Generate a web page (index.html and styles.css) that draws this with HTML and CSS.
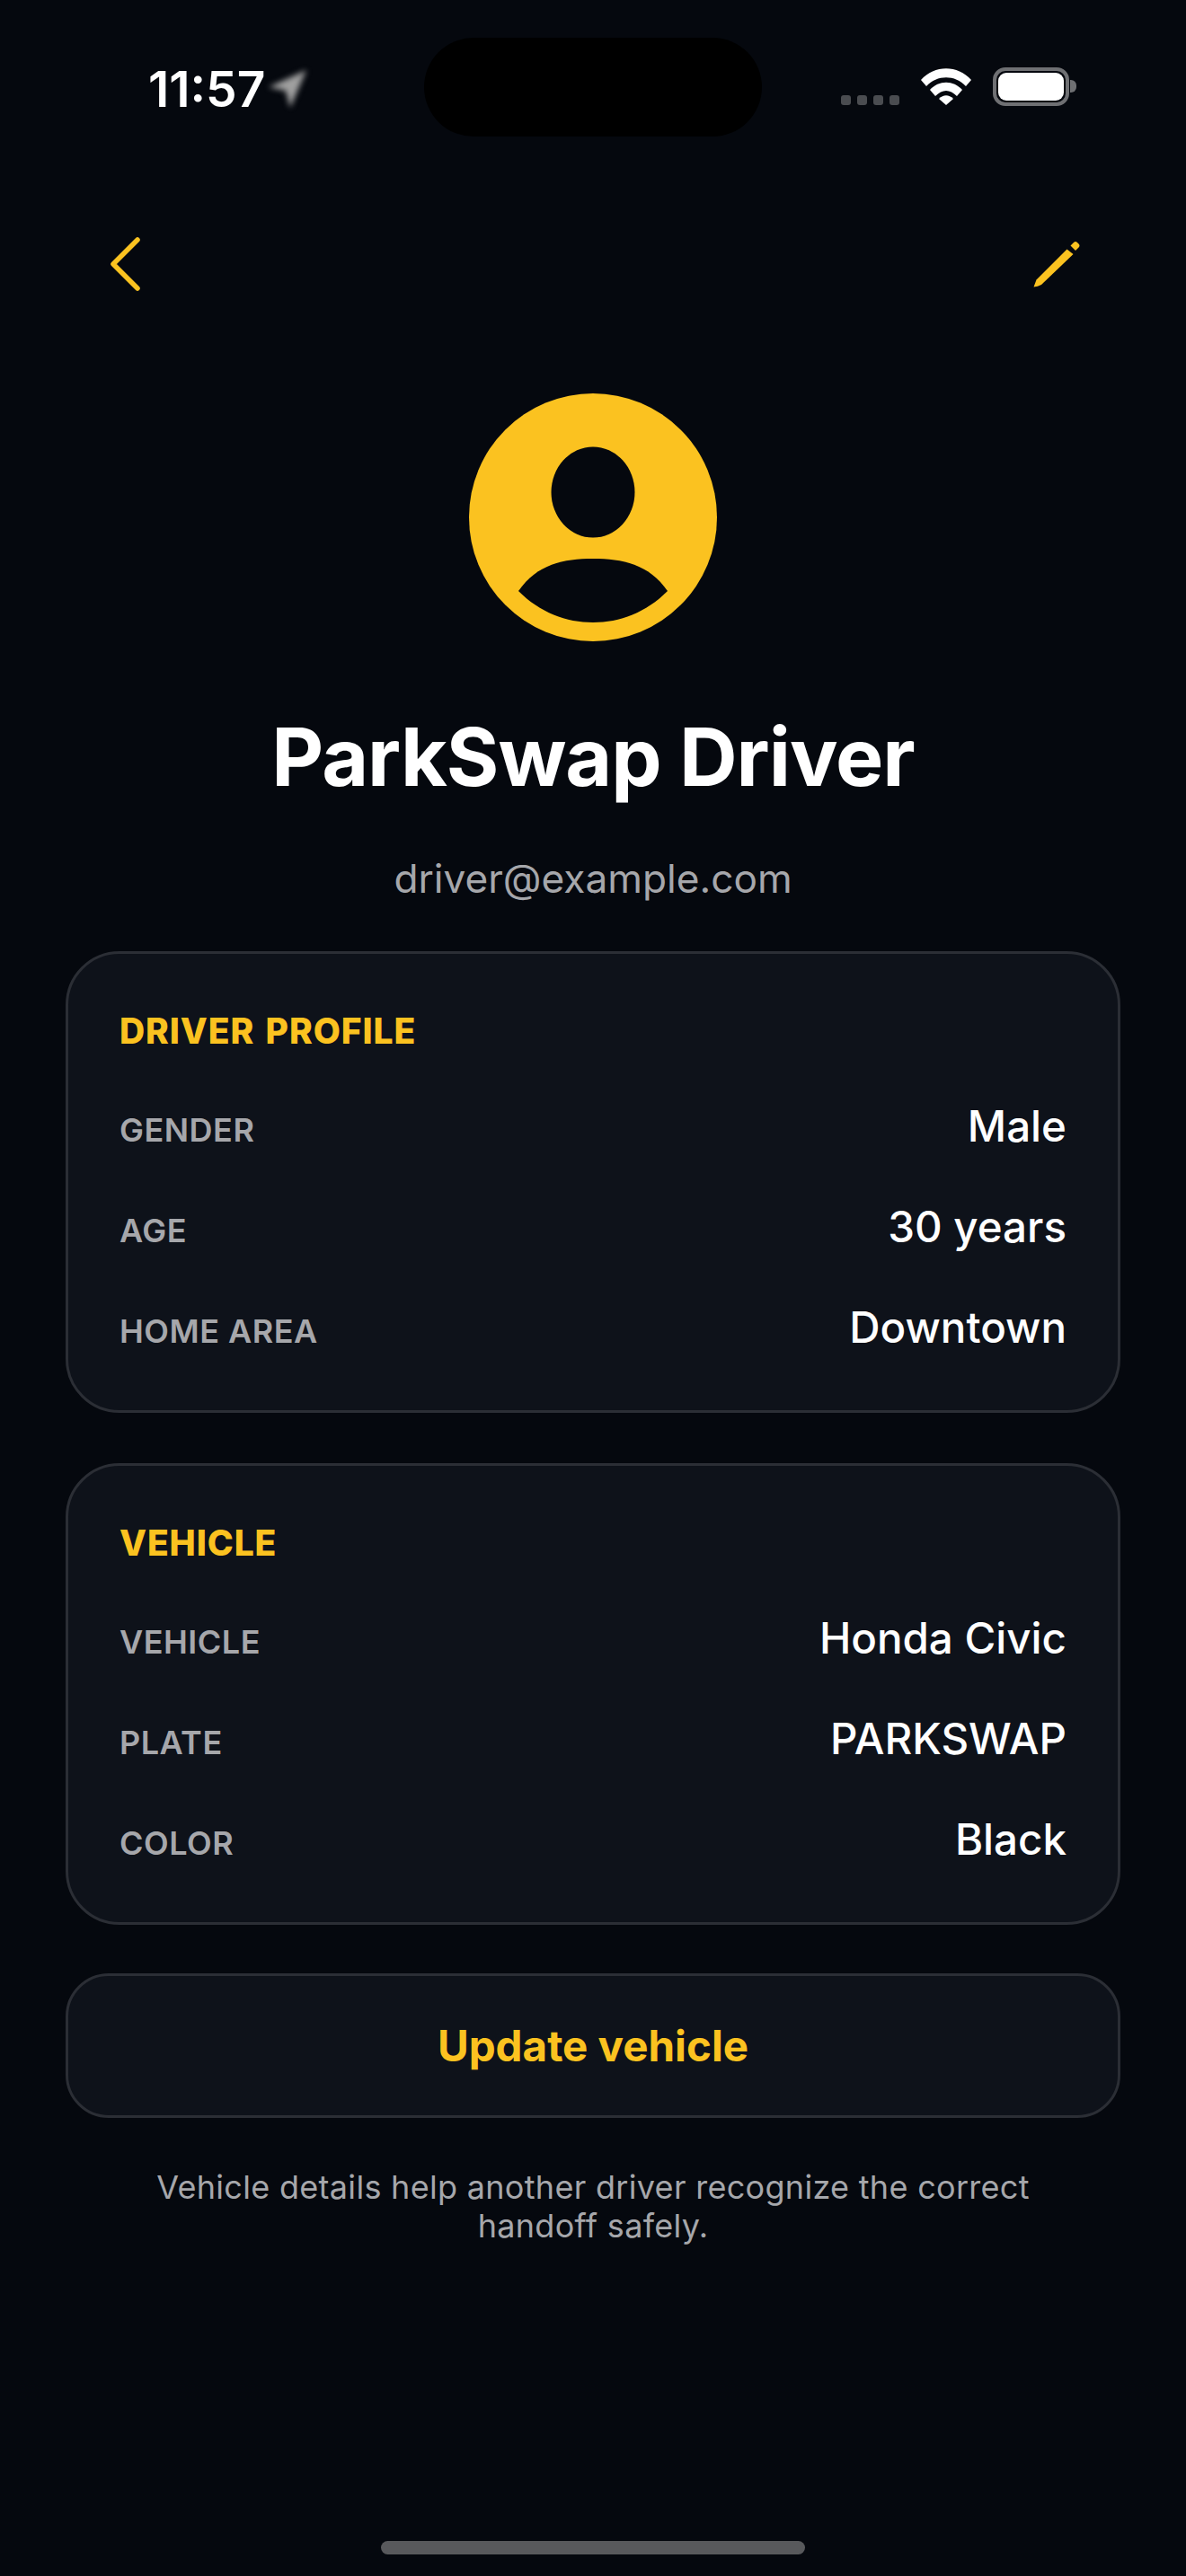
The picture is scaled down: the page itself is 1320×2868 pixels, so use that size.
FILE: index.html
```html
<!DOCTYPE html>
<html lang="en">
<head>
    <meta charset="UTF-8">
    <meta name="viewport" content="width=device-width, initial-scale=1.0">
    <title>ParkSwap Driver</title>
    <link rel="stylesheet" href="styles.css">
</head>
<body>
    <div class="screen">
        <div class="status-bar">
            <div class="status-left">
                <span class="clock">11:57</span>
                <svg class="location" width="48" height="48" viewBox="0 0 48 48">
                    <path d="M45 3 L3 22 L22 26 L27 45 Z" fill="#a0a0a0"/>
                </svg>
            </div>
            <div class="island"></div>
            <div class="status-right">
                <div class="signal"><i></i><i></i><i></i><i></i></div>
                <svg class="wifi" width="58" height="42" viewBox="0 0 58 42">
                    <path d="M1 14 C16 -3 42 -3 57 14 L51 21 C39 8 19 8 7 21 Z" fill="#fff"/>
                    <path d="M11 25 C21 14 37 14 47 25 L41 32 C33 24 25 24 17 32 Z" fill="#fff"/>
                    <path d="M21 35 C26 30 32 30 37 35 L29 42 Z" fill="#fff"/>
                </svg>
                <div class="battery"><div class="battery-fill"></div></div>
                <div class="battery-cap"></div>
            </div>
        </div>

        <div class="nav">
            <svg width="40" height="64" viewBox="0 0 40 64">
                <path d="M33 5 L6 32 L33 59" fill="none" stroke="#fbc220" stroke-width="5.500" stroke-linecap="round" stroke-linejoin="round"/>
            </svg>
            <svg width="60" height="60" viewBox="0 0 60 60">
                <path d="M5.500 55.500 L8.500 47.500 L42.500 13.500 L49.500 19 L14 53 Q10 55 5.500 55.500 Z" fill="#fbc220"/>
                <path d="M46.500 9.500 L50 6 Q52 4 54 6 L55.500 7.500 Q57.500 9.500 55.500 11.500 L52 15 Z" fill="#fbc220"/>
            </svg>
        </div>

        <div class="profile">
            <svg class="avatar" width="276" height="276" viewBox="0 0 276 276">
                <circle cx="138" cy="138" r="138" fill="#fbc220"/>
                <ellipse cx="138" cy="110" rx="46.500" ry="50.500" fill="#05080e"/>
                <path d="M55 220 C76 190 105 184 138 184 C171 184 200 190 221 220 C197 244 168 255 138 255 C108 255 79 244 55 220 Z" fill="#05080e"/>
            </svg>
            <h1 class="name">ParkSwap Driver</h1>
            <p class="email">driver@example.com</p>
        </div>

        <div class="card">
            <h2 class="card-title">DRIVER PROFILE</h2>
            <div class="row"><span class="label">GENDER</span><span class="value">Male</span></div>
            <div class="row"><span class="label">AGE</span><span class="value">30 years</span></div>
            <div class="row"><span class="label">HOME AREA</span><span class="value">Downtown</span></div>
        </div>

        <div class="card">
            <h2 class="card-title">VEHICLE</h2>
            <div class="row"><span class="label">VEHICLE</span><span class="value">Honda Civic</span></div>
            <div class="row"><span class="label">PLATE</span><span class="value">PARKSWAP</span></div>
            <div class="row"><span class="label">COLOR</span><span class="value">Black</span></div>
        </div>

        <button class="update-btn">Update vehicle</button>

        <p class="note">Vehicle details help another driver recognize the correct handoff safely.</p>

        <div class="home-indicator"></div>
    </div>
</body>
</html>
```
FILE: styles.css
```css
* {
    box-sizing: border-box;
}

body {
    margin: 0;
    background-color: #05080e;
    font-family: Inter, "Liberation Sans", sans-serif;
    color: #ffffff;
}

.screen {
    height: 2868px;
    display: flex;
    flex-direction: column;
    overflow: hidden;
}

.status-bar {
    height: 110px;
    margin-top: 42px;
    display: grid;
    grid-template-columns: 472px 376px 472px;
}

.status-left {
    display: flex;
    align-items: flex-start;
    padding: 24px 0 0 165px;
}

.clock {
    font-size: 55px;
    font-weight: 600;
    line-height: 66px;
}

.location {
    margin-top: 9px;
    margin-left: 1px;
    filter: blur(3px);
}

.island {
    background-color: #000000;
    border-radius: 55px;
}

.status-right {
    display: flex;
    align-items: flex-start;
    justify-content: flex-end;
    padding: 33px 122px 0 0;
}

.signal {
    display: flex;
    gap: 7px;
    margin-top: 31px;
    margin-right: 23px;
}

.signal i {
    width: 11px;
    height: 11px;
    border-radius: 3px;
    background-color: #4a4c50;
}

.wifi {
    margin-right: 23px;
}

.battery {
    width: 85px;
    height: 43px;
    border: 4px solid #6f7073;
    border-radius: 14px;
    padding: 2px;
}

.battery-fill {
    height: 100%;
    background-color: #ffffff;
    border-radius: 9px;
}

.battery-cap {
    width: 7px;
    height: 14px;
    margin-top: 14px;
    margin-left: 1px;
    background-color: #6f7073;
    border-radius: 0 6px 6px 0;
}

.nav {
    display: flex;
    justify-content: space-between;
    align-items: center;
    padding: 0 115px 0 120px;
    margin-top: 110px;
}

.profile {
    display: flex;
    flex-direction: column;
    align-items: center;
    margin-top: 112px;
}

.name {
    margin: 77px 0 0;
    font-size: 89.5px;
    font-weight: 700;
    line-height: 104px;
    letter-spacing: -1px;
}

.email {
    margin: 56px 0 0;
    font-size: 44.2px;
    font-weight: 400;
    line-height: 54px;
    color: #a6a7ab;
}

.card {
    margin: 56px 73px 0;
    height: 514px;
    padding: 63px 57px 0;
    background-color: #0e121a;
    border: 3px solid #2b2e35;
    border-radius: 60px;
}

.profile + .card {
    margin-top: 54px;
}

.card-title {
    margin: 0 0 26px;
    font-size: 39px;
    font-weight: 800;
    line-height: 46px;
    letter-spacing: 0.9px;
    word-spacing: 3px;
    color: #fbc220;
}

.row {
    display: flex;
    justify-content: space-between;
    align-items: center;
    height: 112px;
}

.label {
    font-size: 36px;
    font-weight: 600;
    letter-spacing: 0.5px;
    color: #a6a7ab;
    padding-top: 10px;
}

.value {
    font-size: 47.5px;
    font-weight: 500;
}

.update-btn {
    margin: 54px 73px 0;
    height: 161px;
    background-color: #0e121a;
    border: 3px solid #2b2e35;
    border-radius: 48px;
    font-family: inherit;
    font-size: 47.5px;
    font-weight: 700;
    color: #fbc220;
}

.note {
    margin: 56px 150px 0;
    font-size: 36px;
    line-height: 43px;
    letter-spacing: 0.3px;
    text-align: center;
    color: #a6a7ab;
}

.home-indicator {
    width: 472px;
    height: 15px;
    margin: auto auto 24px;
    background-color: #58595c;
    border-radius: 8px;
}
```
